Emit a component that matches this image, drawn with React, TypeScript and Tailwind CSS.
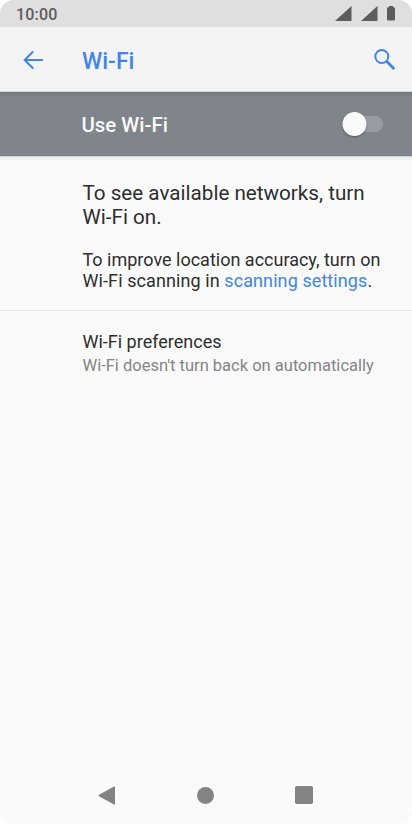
import React, { useState } from 'react';

const BackIcon: React.FC = () => (
  <svg width="20" height="20" viewBox="0 0 20 20" fill="none" stroke="currentColor" strokeWidth="2.1" strokeLinecap="round">
    <path d="M9.6 2 1.7 10 9.6 18M1.7 10H19" />
  </svg>
);

const SearchIcon: React.FC = () => (
  <svg width="22" height="22" viewBox="0 0 22 22" fill="none" stroke="currentColor">
    <circle cx="7.8" cy="7.5" r="6.5" strokeWidth="2" />
    <path d="M12.6 12.3 20.2 19.9" strokeWidth="2.8" />
  </svg>
);

const SignalIcon: React.FC = () => (
  <svg width="17" height="15" viewBox="0 0 17 15" fill="currentColor">
    <path d="M0 15 16.5 0V15Z" />
  </svg>
);

const BatteryIcon: React.FC = () => (
  <svg width="8" height="15" viewBox="0 0 8 15" fill="currentColor">
    <path d="M2 0H6V1.3H7Q8 1.3 8 2.3V13.5Q8 14.5 7 14.5H1Q0 14.5 0 13.5V2.3Q0 1.3 1 1.3H2Z" />
  </svg>
);

const StatusBar: React.FC = () => (
  <div className="flex h-[27px] shrink-0 items-center justify-between bg-[#dfdfdf] pr-[17px] pl-[16px] text-[#5c5c5c]">
    <span className="pt-[2px] text-[16px] leading-none font-medium tracking-[0.2px]">10:00</span>
    <div className="flex items-center pb-px">
      <SignalIcon />
      <span className="w-[9px]" />
      <SignalIcon />
      <span className="w-[9.5px]" />
      <BatteryIcon />
    </div>
  </div>
);

const NavBar: React.FC = () => (
  <nav className="flex h-[58px] shrink-0 items-center justify-between pr-[99.5px] pl-[97.5px] text-[#838383]">
    <button type="button" aria-label="Back">
      <svg width="17" height="19" viewBox="0 0 17 19" fill="currentColor">
        <path d="M16 .6Q17 0 17 1V18Q17 19 16 18.4L1 10.2Q0 9.5 1 8.8Z" />
      </svg>
    </button>
    <button type="button" aria-label="Home" className="ml-px size-[17px] rounded-full bg-[#838383]" />
    <button type="button" aria-label="Recent apps" className="size-[18px] rounded-[2px] bg-[#838383]" />
  </nav>
);

const App: React.FC = () => {
  const [enabled, setEnabled] = useState(false);

  return (
    <div className="h-[824px] w-[412px] bg-white">
      <div className="flex h-full flex-col overflow-hidden rounded-[14px] bg-[#fafafa] font-['Roboto',sans-serif] text-[#2e2e2e]">
        <StatusBar />

        <header className="flex h-[65px] shrink-0 items-center border-b border-[#d4d5d7] bg-[#f4f4f4] pt-px pr-[16px] pl-[23px] text-[#4285e8]">
          <button type="button" aria-label="Back">
            <BackIcon />
          </button>
          <h1 className="ml-[39px] flex-1 pt-[3px] text-[23px] leading-none font-medium">Wi-Fi</h1>
          <button type="button" aria-label="Search">
            <SearchIcon />
          </button>
        </header>

        <div className="flex h-[64px] shrink-0 items-center justify-between bg-[#80858b] bg-linear-to-b from-[#747a7e] from-0% to-[#80858b] to-[10%] pr-[29px] pl-[81.5px]">
          <span className="pt-[3px] text-[20.4px] leading-none font-medium text-[#fafafa]">Use Wi-Fi</span>
          <button
            type="button"
            role="switch"
            aria-checked={enabled}
            aria-label="Use Wi-Fi"
            onClick={() => setEnabled(!enabled)}
            className="flex h-4 w-[35px] items-center rounded-full bg-[#999da1]"
          >
            <span
              className={`size-6 shrink-0 rounded-full bg-[#fafafa] shadow-[0_1px_2px_rgba(0,0,0,0.35)] ${
                enabled ? 'translate-x-4' : '-translate-x-[5.5px]'
              }`}
            />
          </button>
        </div>
        <div className="h-1 shrink-0 border-t border-[#d5d5d8] bg-[#f1f1f1]" />

        <section className="h-[151px] shrink-0 border-b border-[#e0e0e0] pt-[21px] pl-[82.5px] whitespace-nowrap">
          <p className="text-[20.65px] leading-[24px]">
            To see available networks, turn
            <br />
            Wi-Fi on.
          </p>
          <p className="mt-[20px] text-[18px] leading-[21px]">
            To improve location accuracy, turn on
            <br />
            <span className="tracking-[0.09px]">
              Wi-Fi scanning in <a className="text-[#4285e8]">scanning settings</a>.
            </span>
          </p>
        </section>

        <section className="flex-1 pt-[19px] pl-[82.5px] whitespace-nowrap">
          <h2 className="text-[18px] leading-[23px]">Wi-Fi preferences</h2>
          <p className="mt-px text-[16.5px] leading-[24px] text-[#858585]">Wi-Fi doesn't turn back on automatically</p>
        </section>

        <NavBar />
      </div>
    </div>
  );
};

export default App;
